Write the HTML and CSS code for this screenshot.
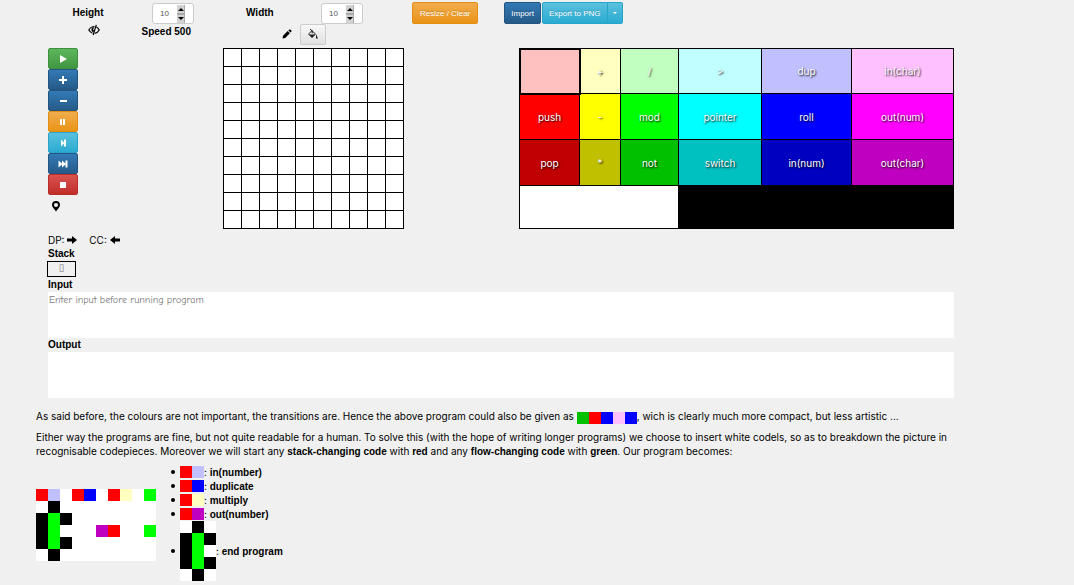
FILE: index.html
```html
<!DOCTYPE html>
<html lang="en">
<head>
<meta charset="utf-8">
<title>Piet editor</title>
<link rel="stylesheet" href="styles.css">
</head>
<body>
<main class="editor">
  <header class="toolbar">
    <div class="settings">
      <label class="name" for="height">Height</label>
      <span class="number">
        <input id="height" type="text" inputmode="numeric" value="10">
        <svg class="spinner" viewBox="0 0 8 18" width="8" height="18" aria-hidden="true"><path fill="#d2d2d2" d="M0 0h8v18H0z"/><path fill="#aaa" d="M0 8h8v2H0zM7 0h1v18H7z"/><path d="M4 3l3 3H1zM4 15l3-3H1z"/></svg>
      </span>
      <button class="icon-btn eye" aria-label="Hide commands"><svg viewBox="0 0 12 12" width="12" height="12"><path fill="none" stroke="#000" stroke-width="1.2" d="M6.500 2.500C3.500 2.500 1.800 4.200 .8 6 1.800 7.800 3 8.700 4.500 9.200M8.500 3C9.900 3.800 10.700 4.800 11.200 6 10.300 7.800 8.800 9 6.800 9.400M8.300 .8L5.200 11"/><path d="M6.500 3.200C4 3 3 5 3.500 6.500 4 8 5 8.200 5.500 8L6 6 4.800 5.500z"/></svg></button>
      <span class="speed">Speed 500</span>
    </div>
    <div class="settings second">
      <label class="name" for="width">Width</label>
      <span class="number">
        <input id="width" type="text" inputmode="numeric" value="10">
        <svg class="spinner" viewBox="0 0 8 18" width="8" height="18" aria-hidden="true"><path fill="#d2d2d2" d="M0 0h8v18H0z"/><path fill="#aaa" d="M0 8h8v2H0zM7 0h1v18H7z"/><path d="M4 3l3 3H1zM4 15l3-3H1z"/></svg>
      </span>
      <div class="paint">
        <button class="icon-btn" aria-label="Pencil"><svg viewBox="0 0 10 10" width="10" height="10"><path d="M.5 9.500L1 6.800 5.700 2.100 7.900 4.300 3.200 9zM6.400 1.400L7.300.6Q8 .2 8.600.8L9.300 1.500Q9.800 2.100 9.300 2.700L8.600 3.600z"/></svg></button>
        <button class="icon-btn raised" aria-label="Fill"><svg viewBox="0 0 12 12" width="12" height="12"><path fill="none" stroke="#222" stroke-width="1" d="M3 1l5.500 5L5 9.500 1.500 6 5.200 2.500V5.500"/><path fill="#222" d="M2 6.500h6.200L5 9.800zM9 6l2 4.500H9z"/></svg></button>
      </div>
    </div>
    <div class="actions">
      <button class="btn orange">Resize / Clear</button>
      <div class="group">
        <button class="btn blue">Import</button>
        <div class="split"><button class="btn sky">Export to PNG</button><button class="btn sky caret" aria-label="More export options"><svg viewBox="0 0 4 2" width="4" height="2"><path d="M0 0h4L2 2z"/></svg></button></div>
      </div>
    </div>
  </header>

  <section class="work">
    <div class="controls">
      <button class="btn green" aria-label="Run"><svg viewBox="0 0 10 8" width="10" height="8"><path d="M2 0l7 4-7 4z"/></svg></button>
      <button class="btn blue" aria-label="Faster"><svg viewBox="0 0 10 8" width="10" height="8"><path d="M4 0h2v3h3v2H6v3H4V5H1V3h3z"/></svg></button>
      <button class="btn blue" aria-label="Slower"><svg viewBox="0 0 10 8" width="10" height="8"><path d="M2 3h7v2H2z"/></svg></button>
      <button class="btn orange" aria-label="Pause"><svg viewBox="0 0 10 8" width="10" height="8"><path d="M2 1h2v6H2zM5 1h2v6H5z"/></svg></button>
      <button class="btn sky" aria-label="Step"><svg viewBox="0 0 10 8" width="10" height="8"><path d="M3 .5l3 3V.5h2v7H6v-3l-3 3z"/></svg></button>
      <button class="btn blue" aria-label="Continue"><svg viewBox="0 0 10 8" width="10" height="8"><path d="M.5 .5l3.500 3V.5l3.500 3V.5h2v7h-2v-3L4 7.500v-3L.5 7.500z"/></svg></button>
      <button class="btn red" aria-label="Stop"><svg viewBox="0 0 10 8" width="10" height="8"><path d="M2 1h6v6H2z"/></svg></button>
      <button class="icon-btn marker" aria-label="Breakpoint"><svg viewBox="0 0 10 12" width="10" height="12"><path fill-rule="evenodd" d="M5 1a4 4 0 0 0-4 4c0 2 2 3.500 4 6.500 2-3 4-4.500 4-6.500a4 4 0 0 0-4-4zm0 2a2 2 0 1 1 0 4 2 2 0 0 1 0-4z"/></svg></button>
    </div>

    <svg class="canvas" viewBox="0 0 181 181" width="181" height="181" role="img" aria-label="Codel grid">
      <path fill="#fff" d="M0 0h181v181H0z"/>
      <path d="M0 0h1v181H0zM18 0h1v181h-1zM36 0h1v181h-1zM54 0h1v181h-1zM72 0h1v181h-1zM90 0h1v181h-1zM108 0h1v181h-1zM126 0h1v181h-1zM144 0h1v181h-1zM162 0h1v181h-1zM180 0h1v181h-1z"/>
      <path d="M0 0h181v1H0zM0 18h181v1H0zM0 36h181v1H0zM0 54h181v1H0zM0 72h181v1H0zM0 90h181v1H0zM0 108h181v1H0zM0 126h181v1H0zM0 144h181v1H0zM0 162h181v1H0zM0 180h181v1H0z"/>
    </svg>

    <table class="palette">
      <colgroup><col class="c1"><col class="c2"><col class="c3"><col class="c4"><col class="c5"><col class="c6"></colgroup>
      <tr><td class="lred selected"></td><td class="lyellow">+</td><td class="lgreen">/</td><td class="lcyan">&gt;</td><td class="lblue">dup</td><td class="lpink">in(char)</td></tr>
      <tr><td class="nred">push</td><td class="nyellow">-</td><td class="ngreen">mod</td><td class="ncyan">pointer</td><td class="nblue">roll</td><td class="npink">out(num)</td></tr>
      <tr><td class="dred">pop</td><td class="dyellow">*</td><td class="dgreen">not</td><td class="dcyan">switch</td><td class="dblue">in(num)</td><td class="dpink">out(char)</td></tr>
      <tr class="last"><td class="white" colspan="3"></td><td class="black" colspan="3"></td></tr>
    </table>
  </section>

  <section class="state">
    <div class="pointers">
      <span>DP: <svg viewBox="0 0 10 8" width="10" height="8"><path d="M0 2.500h5V0l5 4-5 4V5.500H0z"/></svg></span>
      <span>CC: <svg viewBox="0 0 10 8" width="10" height="8"><path d="M10 2.500H5V0L0 4l5 4V5.500h5z"/></svg></span>
    </div>
    <h2>Stack</h2>
    <div class="stack">▯</div>
    <label for="input">Input</label>
    <textarea id="input" placeholder="Enter input before running program"></textarea>
    <label for="output">Output</label>
    <textarea id="output" readonly></textarea>
  </section>
</main>

<article class="prose">
  <p>As said before, the colours are not important, the transitions are. Hence the above program could also be given as <svg class="codels" viewBox="0 0 5 1" width="60" height="12"><path fill="#00c000" d="M0 0h1v1H0z"/><path fill="red" d="M1 0h1v1H1z"/><path fill="blue" d="M2 0h1v1H2zM4 0h1v1H4z"/><path fill="#ffc0ff" d="M3 0h1v1H3z"/></svg>, wich is clearly much more compact, but less artistic ...</p>
  <p>Either way the programs are fine, but not quite readable for a human. To solve this (with the hope of writing longer programs) we choose to insert white codels, so as to breakdown the picture in recognisable codepieces. Moreover we will start any <b>stack-changing code</b> with <b>red</b> and any <b>flow-changing code</b> with <b>green</b>. Our program becomes:</p>
  <div class="example">
    <svg class="codels" viewBox="0 0 10 6" width="120" height="72" role="img" aria-label="Complete program">
      <path fill="#fff" d="M0 0h10v6H0z"/>
      <path fill="red" d="M0 0h1v1H0zM3 0h1v1H3zM6 0h1v1H6zM6 3h1v1H6z"/>
      <path fill="#c0c0ff" d="M1 0h1v1H1z"/><path fill="blue" d="M4 0h1v1H4z"/><path fill="#ffffc0" d="M7 0h1v1H7z"/>
      <path fill="#000" d="M1 1h1v1H1zM0 2h1v3H0zM2 2h1v1H2zM2 4h1v1H2zM1 5h1v1H1z"/>
      <path fill="lime" d="M1 2h1v3H1zM9 0h1v1H9zM9 3h1v1H9z"/><path fill="#c000c0" d="M5 3h1v1H5z"/>
    </svg>
    <ul>
      <li><svg class="codels" viewBox="0 0 2 1" width="24" height="12"><path fill="red" d="M0 0h1v1H0z"/><path fill="#c0c0ff" d="M1 0h1v1H1z"/></svg><span>: <b>in(number)</b></span></li>
      <li><svg class="codels" viewBox="0 0 2 1" width="24" height="12"><path fill="red" d="M0 0h1v1H0z"/><path fill="blue" d="M1 0h1v1H1z"/></svg><span>: <b>duplicate</b></span></li>
      <li><svg class="codels" viewBox="0 0 2 1" width="24" height="12"><path fill="red" d="M0 0h1v1H0z"/><path fill="#ffffc0" d="M1 0h1v1H1z"/></svg><span>: <b>multiply</b></span></li>
      <li><svg class="codels" viewBox="0 0 2 1" width="24" height="12"><path fill="red" d="M0 0h1v1H0z"/><path fill="#c000c0" d="M1 0h1v1H1z"/></svg><span>: <b>out(number)</b></span></li>
      <li><svg class="codels" viewBox="0 0 3 5" width="36" height="60"><path fill="#fff" d="M0 0h3v5H0z"/><path d="M1 0h1v1H1zM0 1h1v3H0zM2 1h1v1H2zM2 3h1v1H2zM1 4h1v1H1z"/><path fill="lime" d="M1 1h1v3H1z"/></svg><span>: <b>end program</b></span></li>
    </ul>
  </div>
</article>
</body>
</html>
```
FILE: styles.css
```css
* { box-sizing: border-box; }

body {
  margin: 0;
  background: #f0f0f0;
  color: #000;
  font: 10px/14px Inter, "Liberation Sans", Arial, sans-serif;
}

button, input, textarea, label, b, h2, .speed { font-family: "Liberation Sans", Arial, sans-serif; }
b { line-height: 10px; }

.editor { margin: 0 120px 0 48px; }

/* Toolbar */
.toolbar { display: flex; align-items: flex-start; padding-top: 2px; height: 48px; }

.settings {
  display: grid;
  grid-template-columns: 80px 66px;
  grid-template-rows: 22px 22px;
  align-items: center;
  justify-items: center;
  width: 169px;
}
.settings.second { width: 195px; }
.settings.second .name { justify-self: start; margin-left: 29px; }
.settings .number { justify-self: end; }
.name, .speed { font-weight: bold; white-space: nowrap; }
.eye { justify-self: end; margin-right: 28px; margin-top: -10px; }
.speed { justify-self: end; margin-right: 3px; margin-top: -6px; }

.number { position: relative; display: block; width: 42px; height: 21px; }
.number input {
  display: block;
  width: 100%;
  height: 100%;
  padding: 0 0 0 7px;
  border: 1px solid #ccc;
  border-radius: 3px;
  background: #fff;
  color: #555;
  font-size: 8px;
}
.spinner { position: absolute; top: 2px; right: 9px; }

.paint { grid-column: 1 / 3; justify-self: end; display: flex; gap: 8px; align-items: center; margin-right: 37px; margin-top: -2px; }
.icon-btn { display: block; padding: 0; border: 0; background: none; }
.icon-btn svg { display: block; }
.raised {
  display: grid;
  place-items: center;
  width: 26px;
  height: 21px;
  border: 1px solid #ccc;
  border-radius: 2px;
  background: linear-gradient(#f8f8f8, #e0e0e0);
}

.actions { display: flex; gap: 26px; }
.group { display: flex; gap: 1px; }
.split { display: flex; }
.btn {
  display: grid;
  place-items: center;
  height: 22px;
  padding: 0 6px;
  border: 1px solid;
  border-radius: 2px;
  color: #fff;
  font-size: 8px;
  white-space: nowrap;
  text-shadow: 0 -1px 0 #00000033;
}
.actions > .btn { padding: 0 7px; }
.btn path { fill: #fff; }
.split .btn:first-child { border-radius: 2px 0 0 2px; }
.split .caret { width: 16px; margin-left: -1px; padding: 0; border-radius: 0 2px 2px 0; }
.green { background: linear-gradient(#5cb85c, #419641); border-color: #3e8f3e; }
.blue { background: linear-gradient(#337ab7, #265a88); border-color: #245580; }
.orange { background: linear-gradient(#f0ad4e, #eb9316); border-color: #e38d13; }
.sky { background: linear-gradient(#5bc0de, #2aabd2); border-color: #28a4c9; }
.red { background: linear-gradient(#d9534f, #c12e2a); border-color: #b92c28; }

/* Work area */
.work { display: flex; align-items: flex-start; }
.controls { display: flex; flex-direction: column; width: 30px; margin-right: 145px; }
.controls .btn { height: 21px; padding: 0; }
.marker { margin: 5px 0 0 3px; }
.marker svg { width: 10px; height: 12px; }
.canvas { flex: none; display: block; margin-right: 115px; }

.palette { flex: 1; height: 181px; table-layout: fixed; border-collapse: collapse; }
.palette td {
  height: 46px;
  padding: 0;
  border: 1px solid #000;
  color: #fff;
  text-align: center;
  vertical-align: middle;
  text-shadow: 1px 1px 2px #000;
}
.palette tr:first-child td { height: 45px; }
.palette .last td { height: 43px; }
.c1 { width: 60px; }
.c2 { width: 41px; }
.c3 { width: 58px; }
.c4 { width: 83px; }
.c5 { width: 90px; }
.c6 { width: 102px; }
.selected { outline: 2px solid #000; outline-offset: -1px; }
.lred { background: #ffc0c0; }
.lyellow { background: #ffffc0; }
.lgreen { background: #c0ffc0; }
.lcyan { background: #c0ffff; }
.lblue { background: #c0c0ff; }
.lpink { background: #ffc0ff; }
.nred { background: #f00; }
.nyellow { background: #ff0; }
.ngreen { background: #0f0; }
.ncyan { background: #0ff; }
.nblue { background: #00f; }
.npink { background: #f0f; }
.dred { background: #c00000; }
.dyellow { background: #c0c000; }
.dgreen { background: #00c000; }
.dcyan { background: #00c0c0; }
.dblue { background: #0000c0; }
.dpink { background: #c000c0; }
.white { background: #fff; }
.black { background: #000; }

/* Interpreter state */
.state { padding-top: 4px; }
.pointers { display: flex; gap: 12px; }
.state h2, .state label { display: block; margin: 0; font-size: 10px; line-height: 14px; font-weight: bold; }
.stack {
  width: 29px;
  height: 16px;
  margin: 0 0 1px -1px;
  border: 1px solid #000;
  color: #777;
  font: 10px/12px "DejaVu Sans", sans-serif;
  text-align: center;
}
textarea {
  display: block;
  width: 100%;
  height: 46px;
  padding: 1px;
  border: 0;
  background: #fff;
  font: 10px/14px "Comic Neue", "Comic Sans MS", Lato, sans-serif;
  resize: none;
}
textarea::placeholder { color: #777; }

/* Explanation */
.prose { padding: 11px 120px 0 36px; }
.prose p { margin: 0 0 7px; }
.codels { shape-rendering: crispEdges; }
p .codels { vertical-align: -2px; height: 12px; margin: -2px 0; }
.example { display: flex; align-items: center; }
.example > .codels { flex: none; margin-top: 4px; }
ul { margin: 0; padding: 0 0 0 24px; }
li { position: relative; display: flex; align-items: center; min-height: 14px; }
li::before { content: ""; position: absolute; left: -9px; width: 4px; height: 4px; border-radius: 50%; background: #000; }
```
